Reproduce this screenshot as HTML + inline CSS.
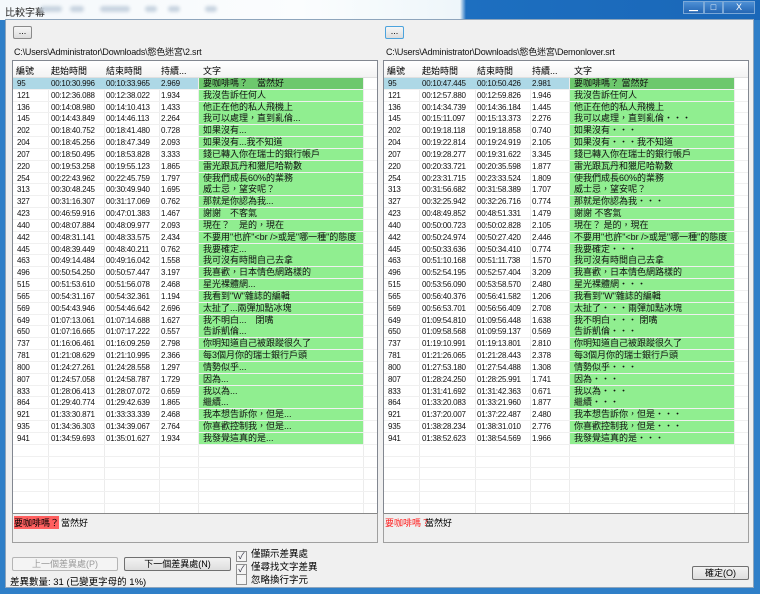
<!DOCTYPE html>
<html><head><meta charset="utf-8">
<style>
*{box-sizing:border-box;margin:0;padding:0}
body{width:760px;height:594px;overflow:hidden;position:relative;background:#2f7fc8;font-family:"Liberation Sans","Noto Sans CJK TC",sans-serif;font-size:10px;color:#000}
#tb{position:absolute;left:0;top:0;width:760px;height:20px;background:linear-gradient(90deg,#f4f8fb 0,#fbfdfe 300px,#eef6fa 460px,#1d6fc0 466px,#1a67b8 760px)}
#tb .t{position:absolute;left:5px;top:4px;font-size:10px;color:#222}
.blur{position:absolute;top:6px;height:6px;background:#c8d4e0;border-radius:3px;filter:blur(1.5px)}
.cb{position:absolute;top:1px;height:13px;border:1px solid #7aa8d8;background:linear-gradient(#4d8fd4,#2466b3);color:#fff;font-size:9px;text-align:center;line-height:11px}
#cl{position:absolute;left:5px;top:19px;width:749px;height:569px;background:#f0f0f0;border:1px solid #8ea5bc}
.dots{position:absolute;width:19px;height:13px;border:1px solid #8a8a8a;border-radius:2px;background:linear-gradient(#f6f6f6,#dcdcdc);font-size:9px;text-align:center;line-height:9px}
.path{position:absolute;font-size:9px;color:#111;white-space:nowrap;letter-spacing:-0.2px}
.lv{position:absolute;top:60px;width:366px;height:454px;background:#fff;border:1px solid #828790;overflow:hidden}
.hd{position:absolute;left:0;top:0;height:17px;width:100%;background:linear-gradient(#fff,#f3f3f3);border-bottom:1px solid #e0e0e0}
.hd span{position:absolute;top:3px;font-size:9px}
.vl{position:absolute;top:0;bottom:0;width:1px;background:#ececec}
.rw{position:absolute;left:0;width:100%;height:11.83px;border-bottom:1px solid #f0f0f0;white-space:nowrap}
.rw span{position:absolute;top:0;line-height:11px;font-size:8px;letter-spacing:-0.25px;color:#111}
.rw span.tx{font-size:9px;letter-spacing:0}
.g{position:absolute;top:0;height:11px;background:#90ee90}
.sel{position:absolute;left:0;top:0;height:11px;background:#add8e6}
.dp{position:absolute;top:513px;width:366px;height:30px;border:1px solid #a0a0a0;border-top:1px solid #888;background:#f0f0f0;font-size:9px}
.btn{position:absolute;height:14px;border:1px solid #707070;border-radius:2px;background:linear-gradient(#f2f2f2,#dedede);font-size:9px;text-align:center;line-height:12px}
.chk{position:absolute;left:236px;font-size:9.5px;white-space:nowrap}
.chk i{display:inline-block;width:11px;height:11px;border:1px solid #8f8f8f;background:#f4f4f4;vertical-align:-2px;margin-right:4px;font-style:normal;font-size:9px;line-height:9px;text-align:center;color:#334}
</style></head><body>
<div id="tb"><span class="t">比較字幕</span>
<div class="blur" style="left:40px;width:22px"></div><div class="blur" style="left:70px;width:14px"></div><div class="blur" style="left:100px;width:30px"></div><div class="blur" style="left:145px;width:12px"></div><div class="blur" style="left:168px;width:12px"></div><div class="blur" style="left:205px;width:12px"></div>
<div class="cb" style="left:683px;width:21px">▁</div><div class="cb" style="left:704px;width:19px">□</div><div class="cb" style="left:723px;width:32px">X</div>
</div>
<div id="cl"></div>
<div class="dots" style="left:13px;top:26px">...</div>
<div class="dots" style="left:385px;top:26px;border-color:#4ca3dd">...</div>
<div class="path" style="left:14px;top:45px">C:\Users\Administrator\Downloads\慾色迷宮\2.srt</div>
<div class="path" style="left:386px;top:45px">C:\Users\Administrator\Downloads\慾色迷宮\Demonlover.srt</div>
<div class="lv" id="L" style="left:12px"></div>
<div class="lv" id="R" style="left:383px"></div>
<div class="dp" style="left:12px"><span style="position:absolute;left:1px;top:2px;background:#ff6060">要咖啡嗎？</span><span style="position:absolute;left:48px;top:2px">當然好</span></div>
<div class="dp" style="left:383px"><span style="position:absolute;left:1px;top:2px;color:#ff2020">要咖啡嗎？</span><span style="position:absolute;left:41px;top:2px">當然好</span></div>
<div class="btn" style="left:12px;top:557px;width:106px;color:#9a9a9a;border-color:#b5b5b5;background:#f4f4f4">上一個差異處(P)</div>
<div class="btn" style="left:124px;top:557px;width:107px">下一個差異處(N)</div>
<div style="position:absolute;left:10px;top:574px;font-size:9.5px">差異數量: 31 (已變更字母的 1%)</div>
<div class="chk" style="top:546px"><i>✓</i>僅顯示差異處</div>
<div class="chk" style="top:559px"><i>✓</i>僅尋找文字差異</div>
<div class="chk" style="top:572px"><i></i>忽略換行字元</div>
<div class="btn" style="left:692px;top:566px;width:57px;height:14px">確定(O)</div>
<script>
var L=[["95","00:10:30.996","00:10:33.965","2.969","要咖啡嗎？　當然好"],["121","00:12:36.088","00:12:38.022","1.934","我沒告訴任何人"],["136","00:14:08.980","00:14:10.413","1.433","他正在他的私人飛機上"],["145","00:14:43.849","00:14:46.113","2.264","我可以處理，直到亂倫..."],["202","00:18:40.752","00:18:41.480","0.728","如果沒有..."],["204","00:18:45.256","00:18:47.349","2.093","如果沒有...我不知道"],["207","00:18:50.495","00:18:53.828","3.333","錢已轉入你在瑞士的銀行帳戶"],["220","00:19:53.258","00:19:55.123","1.865","雷光跟瓦丹和獵尼哈勒數"],["254","00:22:43.962","00:22:45.759","1.797","使我們成長60%的業務"],["313","00:30:48.245","00:30:49.940","1.695","威士忌，望安呢？"],["327","00:31:16.307","00:31:17.069","0.762","那就是你認為我..."],["423","00:46:59.916","00:47:01.383","1.467","謝謝　不客氣"],["440","00:48:07.884","00:48:09.977","2.093","現在？　是的，現在"],["442","00:48:31.141","00:48:33.575","2.434","不要用\"也許\"<br />或是\"哪一種\"的態度"],["445","00:48:39.449","00:48:40.211","0.762","我要確定..."],["463","00:49:14.484","00:49:16.042","1.558","我可沒有時間自己去拿"],["496","00:50:54.250","00:50:57.447","3.197","我喜歡，日本情色網路樣的"],["515","00:51:53.610","00:51:56.078","2.468","星光裸體網..."],["565","00:54:31.167","00:54:32.361","1.194","我看到\"W\"雜誌的編輯"],["569","00:54:43.946","00:54:46.642","2.696","太扯了...兩彈加點冰塊"],["649","01:07:13.061","01:07:14.688","1.627","我不明白...　閉嘴"],["650","01:07:16.665","01:07:17.222","0.557","告訴凱倫..."],["737","01:16:06.461","01:16:09.259","2.798","你明知道自己被跟蹤很久了"],["781","01:21:08.629","01:21:10.995","2.366","每3個月你的瑞士銀行戶頭"],["800","01:24:27.261","01:24:28.558","1.297","情勢似乎..."],["807","01:24:57.058","01:24:58.787","1.729","因為..."],["833","01:28:06.413","01:28:07.072","0.659","我以為..."],["864","01:29:40.774","01:29:42.639","1.865","繼續..."],["921","01:33:30.871","01:33:33.339","2.468","我本想告訴你，但是..."],["935","01:34:36.303","01:34:39.067","2.764","你喜歡控制我，但是..."],["941","01:34:59.693","01:35:01.627","1.934","我發覺這真的是..."]];
var R=[["95","00:10:47.445","00:10:50.426","2.981","要咖啡嗎？ 當然好"],["121","00:12:57.880","00:12:59.826","1.946","我沒告訴任何人"],["136","00:14:34.739","00:14:36.184","1.445","他正在他的私人飛機上"],["145","00:15:11.097","00:15:13.373","2.276","我可以處理，直到亂倫・・・"],["202","00:19:18.118","00:19:18.858","0.740","如果沒有・・・"],["204","00:19:22.814","00:19:24.919","2.105","如果沒有・・・我不知道"],["207","00:19:28.277","00:19:31.622","3.345","錢已轉入你在瑞士的銀行帳戶"],["220","00:20:33.721","00:20:35.598","1.877","雷光跟瓦丹和獵尼哈勒數"],["254","00:23:31.715","00:23:33.524","1.809","使我們成長60%的業務"],["313","00:31:56.682","00:31:58.389","1.707","威士忌，望安呢？"],["327","00:32:25.942","00:32:26.716","0.774","那就是你認為我・・・"],["423","00:48:49.852","00:48:51.331","1.479","謝謝 不客氣"],["440","00:50:00.723","00:50:02.828","2.105","現在？ 是的，現在"],["442","00:50:24.974","00:50:27.420","2.446","不要用\"也許\"<br />或是\"哪一種\"的態度"],["445","00:50:33.636","00:50:34.410","0.774","我要確定・・・"],["463","00:51:10.168","00:51:11.738","1.570","我可沒有時間自己去拿"],["496","00:52:54.195","00:52:57.404","3.209","我喜歡，日本情色網路樣的"],["515","00:53:56.090","00:53:58.570","2.480","星光裸體網・・・"],["565","00:56:40.376","00:56:41.582","1.206","我看到\"W\"雜誌的編輯"],["569","00:56:53.701","00:56:56.409","2.708","太扯了・・・兩彈加點冰塊"],["649","01:09:54.810","01:09:56.448","1.638","我不明白・・・ 閉嘴"],["650","01:09:58.568","01:09:59.137","0.569","告訴凱倫・・・"],["737","01:19:10.991","01:19:13.801","2.810","你明知道自己被跟蹤很久了"],["781","01:21:26.065","01:21:28.443","2.378","每3個月你的瑞士銀行戶頭"],["800","01:27:53.180","01:27:54.488","1.308","情勢似乎・・・"],["807","01:28:24.250","01:28:25.991","1.741","因為・・・"],["833","01:31:41.692","01:31:42.363","0.671","我以為・・・"],["864","01:33:20.083","01:33:21.960","1.877","繼續・・・"],["921","01:37:20.007","01:37:22.487","2.480","我本想告訴你，但是・・・"],["935","01:38:28.234","01:38:31.010","2.776","你喜歡控制我，但是・・・"],["941","01:38:52.623","01:38:54.569","1.966","我發覺這真的是・・・"]];
function esc(s){return s.replace(/&/g,"&amp;").replace(/</g,"&lt;")}
function build(id,data){
 var el=document.getElementById(id),cx=[4,38,93,148,190],vx=[35,91,146,185,350],h="";
 vx.forEach(function(x){h+='<div class="vl" style="left:'+x+'px"></div>'});
 h+='<div class="hd"><span style="left:3px">編號</span><span style="left:38px">起始時間</span><span style="left:93px">結束時間</span><span style="left:148px">持續...</span><span style="left:190px">文字</span></div>';
 for(var i=0;i<37;i++){
  var y=17+i*11.83,r=data[i];
  h+='<div class="rw" style="top:'+y+'px">';
  if(r){
   if(i==0)h+='<div class="sel" style="width:185px"></div>';
   h+='<div class="g" style="left:186px;width:164px;'+(i==0?'background:#6dc86d':'')+'"></div>';
   for(var j=0;j<5;j++)h+='<span'+(j==4?' class="tx"':'')+' style="left:'+cx[j]+'px">'+esc(r[j])+'</span>';
  }
  h+='</div>';
 }
 el.innerHTML=h;
}
build("L",L);build("R",R);
</script>
</body></html>
